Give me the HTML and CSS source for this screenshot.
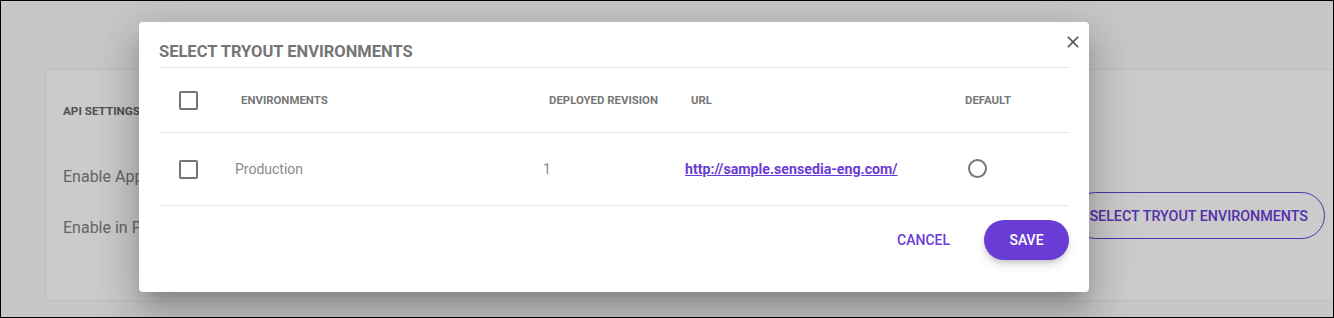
FILE: index.html
```html
<!DOCTYPE html>
<html lang="en">
<head>
<meta charset="utf-8">
<title>Select Tryout Environments</title>
<link rel="stylesheet" href="styles.css">
</head>
<body>
<div class="frame">
  <div class="page">
    <section class="card">
      <div class="card-main">
        <h3 class="card-title">API SETTINGS</h3>
        <div class="setting setting-first">Enable Application Tryout</div>
        <div class="setting">Enable in Portal</div>
      </div>
      <div class="card-side">
        <button class="outline-btn" type="button">SELECT TRYOUT ENVIRONMENTS</button>
      </div>
    </section>
  </div>
  <div class="overlay"></div>
  <div class="dialog" role="dialog">
    <h2 class="dialog-title">SELECT TRYOUT ENVIRONMENTS</h2>
    <button class="close-btn" type="button" aria-label="Close">
      <svg viewBox="0 0 24 24" width="20" height="20"><path d="M19 6.41L17.59 5 12 10.59 6.41 5 5 6.41 10.59 12 5 17.59 6.41 19 12 13.41 17.59 19 19 17.59 13.41 12z" fill="#555"/></svg>
    </button>
    <div class="env-table">
      <div class="env-head">
        <div class="cell-check"><span class="checkbox"></span></div>
        <div class="head-cell">ENVIRONMENTS</div>
        <div class="head-cell">DEPLOYED REVISION</div>
        <div class="head-cell">URL</div>
        <div class="head-cell head-last">DEFAULT</div>
      </div>
      <div class="env-row">
        <div class="cell-check"><span class="checkbox"></span></div>
        <div class="body-cell">Production</div>
        <div class="body-cell">1</div>
        <div class="body-cell"><a class="env-link" href="#">http://sample.sensedia-eng.com/</a></div>
        <div class="body-cell"><span class="radio"></span></div>
      </div>
    </div>
    <div class="dialog-actions">
      <button class="text-btn" type="button">CANCEL</button>
      <button class="primary-btn" type="button">SAVE</button>
    </div>
  </div>
</div>
</body>
</html>
```

FILE: styles.css
```css
* { box-sizing: border-box; }

html, body {
  margin: 0;
  padding: 0;
  background: #000;
}

body {
  font-family: Roboto, "Liberation Sans", Arial, sans-serif;
}

.frame {
  position: relative;
  width: 1334px;
  height: 318px;
  border: 1px solid #000;
  overflow: hidden;
  background: #f9f9f9;
}

.page {
  padding: 68px 0 0 44px;
}

.card {
  width: 1300px;
  height: 232px;
  background: #fefefe;
  border: 1px solid #efefef;
  display: flex;
  justify-content: space-between;
  padding: 33px 19px 0 17px;
}

.card-title {
  margin: 0;
  font-size: 11.7px;
  line-height: 16px;
  font-weight: 700;
  color: #666;
}

.setting {
  font-size: 16px;
  line-height: 24px;
  color: #808080;
  margin-top: 27px;
}

.setting-first {
  margin-top: 46px;
}

.card-side {
  padding-top: 89px;
}

.outline-btn {
  height: 47px;
  padding: 0 16px;
  border: 1px solid #6a3cd6;
  border-radius: 24px;
  background: transparent;
  color: #6a3cd6;
  font-family: inherit;
  font-size: 14.3px;
  font-weight: 500;
  white-space: nowrap;
}

.overlay {
  position: absolute;
  inset: 0;
  background: rgba(0, 0, 0, 0.2);
}

.dialog {
  position: absolute;
  left: 138px;
  top: 21px;
  width: 950px;
  background: #fff;
  border-radius: 4px;
  padding: 20px;
  box-shadow: 0 11px 15px -7px rgba(0,0,0,.2), 0 24px 38px 3px rgba(0,0,0,.14), 0 9px 46px 8px rgba(0,0,0,.12);
}

.dialog-title {
  margin: 0;
  font-size: 16.5px;
  line-height: 19px;
  font-weight: 700;
  color: #757575;
  padding-bottom: 6px;
  border-bottom: 1px solid #e8e8e8;
}

.close-btn {
  position: absolute;
  top: 10px;
  right: 6px;
  width: 20px;
  height: 20px;
  padding: 0;
  border: 0;
  background: transparent;
  display: flex;
}

.env-head,
.env-row {
  display: grid;
  grid-template-columns: 76px 308px 142px 280px 1fr;
  align-items: center;
  border-bottom: 1px solid #e8e8e8;
}

.env-head { height: 65px; }
.env-row { height: 73px; }

.cell-check {
  padding-left: 20px;
  display: flex;
  align-items: center;
}

.checkbox {
  display: block;
  width: 19px;
  height: 19px;
  border: 2px solid #757575;
  border-radius: 2px;
}

.head-cell {
  padding-left: 6px;
  font-size: 11.4px;
  font-weight: 700;
  color: #777;
}

.head-cell.head-last { padding-left: 0; }

.body-cell {
  font-size: 14px;
  color: #8a8a8a;
  display: flex;
  align-items: center;
}

.env-link {
  color: #6a3cd6;
  font-size: 14.2px;
  font-weight: 700;
  text-decoration: underline;
}

.radio {
  display: block;
  width: 19px;
  height: 19px;
  margin-left: 3px;
  margin-bottom: 2px;
  border: 2px solid #757575;
  border-radius: 50%;
}

.dialog-actions {
  display: flex;
  justify-content: flex-end;
  align-items: center;
  padding: 14px 0 12px;
}

.text-btn {
  height: 40px;
  padding: 0 16px;
  margin-right: 18px;
  border: 0;
  background: transparent;
  color: #6a3cd6;
  font-family: inherit;
  font-size: 14px;
  font-weight: 500;
}

.primary-btn {
  height: 40px;
  width: 85px;
  border: 0;
  border-radius: 20px;
  background: #6a3cd6;
  color: #fff;
  font-family: inherit;
  font-size: 14px;
  font-weight: 500;
  box-shadow: 0 3px 5px -1px rgba(0,0,0,.15), 0 6px 10px 0 rgba(0,0,0,.1);
}
```
